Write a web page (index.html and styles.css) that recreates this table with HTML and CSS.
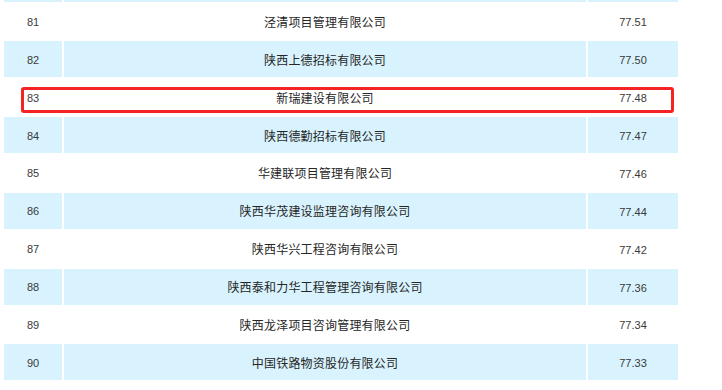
FILE: index.html
```html
<!DOCTYPE html>
<html lang="zh">
<head>
<meta charset="utf-8">
<title>排名</title>
<link rel="stylesheet" href="styles.css">
</head>
<body>
<div class="table">
  <div class="row tail alt"><div class="cell"></div><div class="cell"></div><div class="cell"></div></div>
  <div class="row"><div class="cell num">81</div><div class="cell name">泾清项目管理有限公司</div><div class="cell score">77.51</div></div>
  <div class="row alt"><div class="cell num">82</div><div class="cell name">陕西上德招标有限公司</div><div class="cell score">77.50</div></div>
  <div class="row marked"><div class="cell num">83</div><div class="cell name">新瑞建设有限公司</div><div class="cell score">77.48</div><div class="highlight"></div></div>
  <div class="row alt"><div class="cell num">84</div><div class="cell name">陕西德勤招标有限公司</div><div class="cell score">77.47</div></div>
  <div class="row"><div class="cell num">85</div><div class="cell name">华建联项目管理有限公司</div><div class="cell score">77.46</div></div>
  <div class="row alt"><div class="cell num">86</div><div class="cell name">陕西华茂建设监理咨询有限公司</div><div class="cell score">77.44</div></div>
  <div class="row"><div class="cell num">87</div><div class="cell name">陕西华兴工程咨询有限公司</div><div class="cell score">77.42</div></div>
  <div class="row alt"><div class="cell num">88</div><div class="cell name">陕西泰和力华工程管理咨询有限公司</div><div class="cell score">77.36</div></div>
  <div class="row"><div class="cell num">89</div><div class="cell name">陕西龙泽项目咨询管理有限公司</div><div class="cell score">77.34</div></div>
  <div class="row alt"><div class="cell num">90</div><div class="cell name">中国铁路物资股份有限公司</div><div class="cell score">77.33</div></div>
</div>
</body>
</html>
```

FILE: styles.css
```css
html, body {
  margin: 0;
  padding: 0;
  background: #ffffff;
}

body {
  width: 722px;
  height: 390px;
  overflow: hidden;
  font-family: "Noto Sans CJK SC", "Noto Sans", sans-serif;
  color: #2b2b2b;
}

.table {
  display: flex;
  flex-direction: column;
  gap: 2px;
  padding-left: 4px;
  width: 674px;
}

.row {
  display: grid;
  grid-template-columns: 58px 522px 90px;
  column-gap: 2px;
  height: 35.875px;
  position: relative;
}

.row.tail {
  height: 1.5px;
}

.cell {
  display: flex;
  align-items: center;
  justify-content: center;
  background: #ffffff;
}

.row.alt .cell {
  background: #d8f3fd;
}

.num, .score {
  font-family: "Liberation Sans", Arial, sans-serif;
  font-size: 11px;
  color: #3a3a3a;
}

.num {
  padding-top: 1px;
}

.score {
  padding-top: 2px;
}

.name {
  font-size: 12px;
  letter-spacing: 0.2px;
  color: #262626;
}

.highlight {
  position: absolute;
  left: 17px;
  top: 8px;
  width: 653px;
  height: 26px;
  box-sizing: border-box;
  border: 3px solid #f42424;
  border-radius: 3px;
  pointer-events: none;
}
```
